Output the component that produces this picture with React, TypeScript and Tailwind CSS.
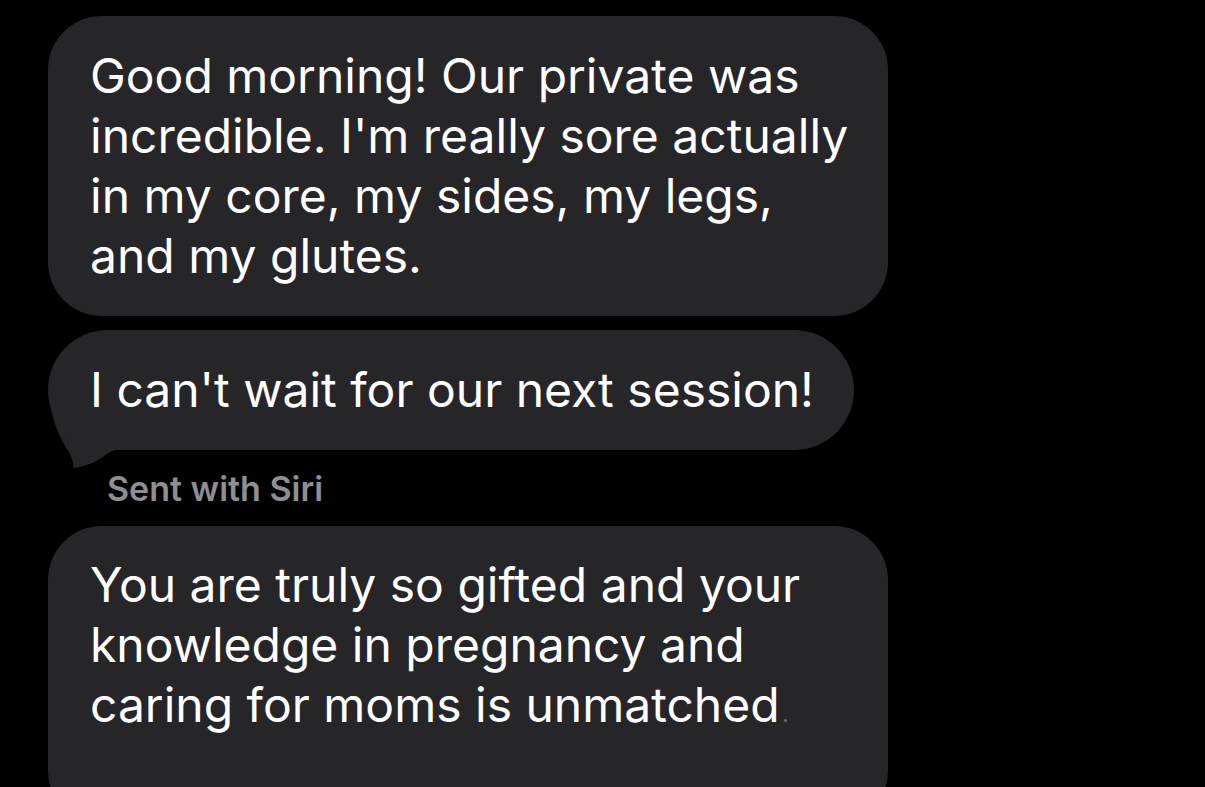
const font = { fontFamily: 'Inter, "Liberation Sans", Arial, sans-serif' };

const Tail = () => (
  <svg
    className="absolute left-[-8px] top-[50px] h-[95px] w-[90px]"
    viewBox="40 380 90 95"
    aria-hidden
  >
    <path
      d="M49 392 C51 422 61 440 69 452 C72 458 74 464 73 468 C85 467 96 462 104 456 C110 452 115 449 122 449 L122 392 Z"
      fill="#262629"
    />
  </svg>
);

const App = () => {
  return (
    <div
      className="h-[787px] w-full overflow-hidden bg-black pl-[48px] pt-[16px] text-white"
      style={font}
    >
      <div className="flex flex-col items-start">
        <div className="w-[840px] rounded-[54px] bg-[#262629] py-[30px] pl-[42px] pr-[30px] text-[48px] leading-[60px]">
          Good morning! Our private was incredible. I'm really sore actually in
          my core, my sides, my legs, and my glutes.
        </div>

        <div className="relative mt-[14px] w-fit">
          <Tail />
          <div className="relative rounded-[60px] bg-[#262629] py-[30px] pl-[42px] pr-[40px] text-[48px] leading-[60px] whitespace-nowrap">
            I can't wait for our next session!
          </div>
        </div>

        <div className="mt-[19px] pl-[59px] text-[34px] font-semibold leading-[40px] text-[#8e8e93]">
          Sent with Siri
        </div>

        <div className="mt-[17px] w-[840px] rounded-[54px] bg-[#262629] pt-[29px] pb-[90px] pl-[42px] pr-[30px] text-[48px] leading-[60px]">
          You are truly so gifted and your knowledge in pregnancy and caring for
          moms is unmatched
          <span className="ml-[4px] inline-block h-[3px] w-[3px] rounded-full bg-[#6e6e73]" />
        </div>
      </div>
    </div>
  );
};

export default App;
